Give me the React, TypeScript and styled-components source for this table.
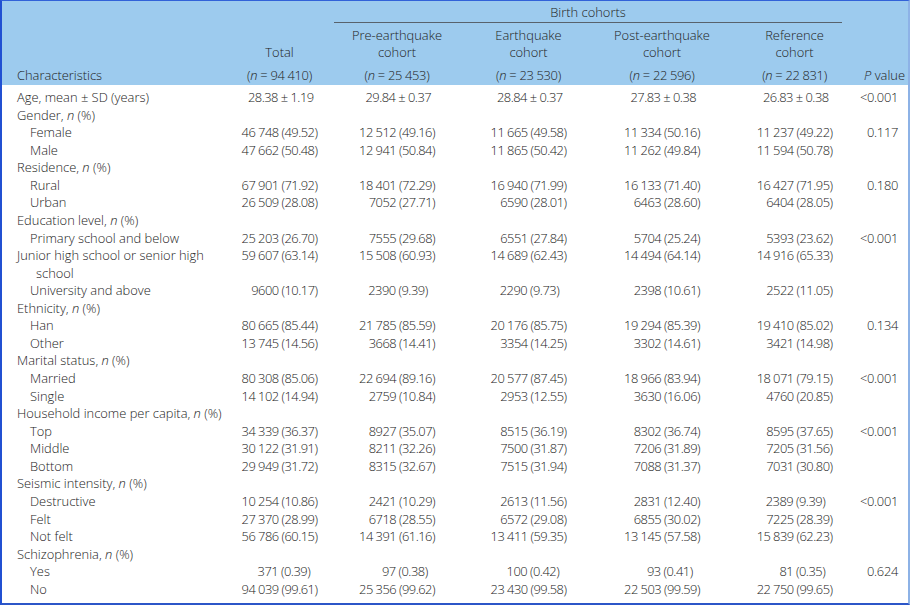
import React from "react";
import styled, { createGlobalStyle } from "styled-components";

type Line = {
  label: string;
  kind: "group" | "item" | "top";
  values?: string[];
  p?: string;
};

const cohorts = [
  { name: ["", "Total"], n: "94 410" },
  { name: ["Pre-earthquake", "cohort"], n: "25 453" },
  { name: ["Earthquake", "cohort"], n: "23 530" },
  { name: ["Post-earthquake", "cohort"], n: "22 596" },
  { name: ["Reference", "cohort"], n: "22 831" },
];

const lines: Line[] = [
  {
    label: "Age, mean ± SD (years)",
    kind: "top",
    values: ["28.38 ± 1.19", "29.84 ± 0.37", "28.84 ± 0.37", "27.83 ± 0.38", "26.83 ± 0.38"],
    p: "<0.001",
  },
  { label: "Gender", kind: "group" },
  {
    label: "Female",
    kind: "item",
    values: ["46 748 (49.52)", "12 512 (49.16)", "11 665 (49.58)", "11 334 (50.16)", "11 237 (49.22)"],
    p: "0.117",
  },
  {
    label: "Male",
    kind: "item",
    values: ["47 662 (50.48)", "12 941 (50.84)", "11 865 (50.42)", "11 262 (49.84)", "11 594 (50.78)"],
  },
  { label: "Residence", kind: "group" },
  {
    label: "Rural",
    kind: "item",
    values: ["67 901 (71.92)", "18 401 (72.29)", "16 940 (71.99)", "16 133 (71.40)", "16 427 (71.95)"],
    p: "0.180",
  },
  {
    label: "Urban",
    kind: "item",
    values: ["26 509 (28.08)", "7052 (27.71)", "6590 (28.01)", "6463 (28.60)", "6404 (28.05)"],
  },
  { label: "Education level", kind: "group" },
  {
    label: "Primary school and below",
    kind: "item",
    values: ["25 203 (26.70)", "7555 (29.68)", "6551 (27.84)", "5704 (25.24)", "5393 (23.62)"],
    p: "<0.001",
  },
  {
    label: "Junior high school or senior high school",
    kind: "top",
    values: ["59 607 (63.14)", "15 508 (60.93)", "14 689 (62.43)", "14 494 (64.14)", "14 916 (65.33)"],
  },
  {
    label: "University and above",
    kind: "item",
    values: ["9600 (10.17)", "2390 (9.39)", "2290 (9.73)", "2398 (10.61)", "2522 (11.05)"],
  },
  { label: "Ethnicity", kind: "group" },
  {
    label: "Han",
    kind: "item",
    values: ["80 665 (85.44)", "21 785 (85.59)", "20 176 (85.75)", "19 294 (85.39)", "19 410 (85.02)"],
    p: "0.134",
  },
  {
    label: "Other",
    kind: "item",
    values: ["13 745 (14.56)", "3668 (14.41)", "3354 (14.25)", "3302 (14.61)", "3421 (14.98)"],
  },
  { label: "Marital status", kind: "group" },
  {
    label: "Married",
    kind: "item",
    values: ["80 308 (85.06)", "22 694 (89.16)", "20 577 (87.45)", "18 966 (83.94)", "18 071 (79.15)"],
    p: "<0.001",
  },
  {
    label: "Single",
    kind: "item",
    values: ["14 102 (14.94)", "2759 (10.84)", "2953 (12.55)", "3630 (16.06)", "4760 (20.85)"],
  },
  { label: "Household income per capita", kind: "group" },
  {
    label: "Top",
    kind: "item",
    values: ["34 339 (36.37)", "8927 (35.07)", "8515 (36.19)", "8302 (36.74)", "8595 (37.65)"],
    p: "<0.001",
  },
  {
    label: "Middle",
    kind: "item",
    values: ["30 122 (31.91)", "8211 (32.26)", "7500 (31.87)", "7206 (31.89)", "7205 (31.56)"],
  },
  {
    label: "Bottom",
    kind: "item",
    values: ["29 949 (31.72)", "8315 (32.67)", "7515 (31.94)", "7088 (31.37)", "7031 (30.80)"],
  },
  { label: "Seismic intensity", kind: "group" },
  {
    label: "Destructive",
    kind: "item",
    values: ["10 254 (10.86)", "2421 (10.29)", "2613 (11.56)", "2831 (12.40)", "2389 (9.39)"],
    p: "<0.001",
  },
  {
    label: "Felt",
    kind: "item",
    values: ["27 370 (28.99)", "6718 (28.55)", "6572 (29.08)", "6855 (30.02)", "7225 (28.39)"],
  },
  {
    label: "Not felt",
    kind: "item",
    values: ["56 786 (60.15)", "14 391 (61.16)", "13 411 (59.35)", "13 145 (57.58)", "15 839 (62.23)"],
  },
  { label: "Schizophrenia", kind: "group" },
  {
    label: "Yes",
    kind: "item",
    values: ["371 (0.39)", "97 (0.38)", "100 (0.42)", "93 (0.41)", "81 (0.35)"],
    p: "0.624",
  },
  {
    label: "No",
    kind: "item",
    values: ["94 039 (99.61)", "25 356 (99.62)", "23 430 (99.58)", "22 503 (99.59)", "22 750 (99.65)"],
  },
];

// narrow space between thousands groups
const thin = (s: string) => s.replace(/(\d) (\d{3})/g, "$1\u2005$2");

const padFor = (s: string) => {
  if (/\(\d\.\d\d\)$/.test(s)) return "1ch";
  if (s.includes("±")) return "0.3em";
  return "0";
};

const GlobalStyle = createGlobalStyle`
  html, body {
    margin: 0;
    padding: 0;
    background: #ffffff;
  }
  body {
    font-family: "Open Sans", "Liberation Sans", Arial, sans-serif;
    color: #222222;
  }
`;

const Frame = styled.div`
  width: 910px;
  height: 605px;
  box-sizing: border-box;
  border-top: 1px solid #3262d8;
  border-left: 2px solid #2150d2;
  border-right: 2px solid #8db2e6;
  border-bottom: 2px solid #2c56c8;
  overflow: hidden;
`;

const Table = styled.table`
  width: 100%;
  border-collapse: collapse;
  table-layout: fixed;
  font-size: 12.9px;
  font-weight: 300;
  line-height: 17.57px;

  th {
    font-weight: 300;
  }
  td,
  th {
    padding: 0;
  }
`;

const Head = styled.thead`
  background: #9dcbee;
`;

const BirthCell = styled.th`
  padding-top: 3px !important;
`;

const BirthLabel = styled.div`
  line-height: 17.5px;
  margin: 0 14px 0 6px;
  border-bottom: 1px solid #58626c;
  text-align: center;
`;

const NameCell = styled.th`
  padding-top: 4px !important;
  line-height: 17.5px;
  text-align: center;
  vertical-align: bottom;
`;

const CountCell = styled.th<{ $align?: "left" | "center" | "right" }>`
  padding: 5px 0 1px 0 !important;
  line-height: 17.5px;
  text-align: ${(p) => p.$align ?? "center"};
  vertical-align: bottom;
  white-space: nowrap;
  letter-spacing: ${(p) => (p.$align ? "0" : "-0.3px")};
  ${(p) => (p.$align === "left" ? "padding-left: 15px !important;" : "")}
  ${(p) => (p.$align === "right" ? "padding-right: 3px !important;" : "")}
`;

const Body = styled.tbody`
  tr:first-child td {
    padding-top: 4px;
  }
`;

const Label = styled.td<{ $kind: Line["kind"] }>`
  text-align: left;
  vertical-align: top;
  padding-left: ${(p) => (p.$kind === "item" ? "28px" : p.$kind === "top" ? "34px" : "15px")} !important;
  text-indent: ${(p) => (p.$kind === "top" ? "-19px" : "0")};
  padding-right: 22px !important;
  white-space: ${(p) => (p.$kind === "group" ? "nowrap" : "normal")};
`;

const NumCell = styled.td`
  text-align: center;
  vertical-align: top;
`;

const Num = styled.span<{ $pad: string }>`
  display: inline-block;
  width: 76px;
  text-align: right;
  white-space: nowrap;
  letter-spacing: -0.5px;
  box-sizing: border-box;
  padding-right: ${(p) => p.$pad};
`;

const PCell = styled.td`
  text-align: right;
  vertical-align: top;
  padding-right: 10px !important;
  white-space: nowrap;
  letter-spacing: -0.3px;
`;

export default function App() {
  return (
    <>
      <GlobalStyle />
      <Frame>
        <Table>
          <colgroup>
            <col style={{ width: 229 }} />
            <col style={{ width: 97 }} />
            <col style={{ width: 138 }} />
            <col style={{ width: 125 }} />
            <col style={{ width: 142 }} />
            <col style={{ width: 123 }} />
            <col style={{ width: 52 }} />
          </colgroup>
          <Head>
            <tr>
              <th colSpan={2} />
              <BirthCell colSpan={4}>
                <BirthLabel>Birth cohorts</BirthLabel>
              </BirthCell>
              <th />
            </tr>
            <tr>
              <th />
              {cohorts.map((c) => (
                <NameCell key={c.n}>
                  {c.name[0] && (
                    <>
                      {c.name[0]}
                      <br />
                    </>
                  )}
                  {c.name[1]}
                </NameCell>
              ))}
              <th />
            </tr>
            <tr>
              <CountCell $align="left">Characteristics</CountCell>
              {cohorts.map((c) => (
                <CountCell key={c.n}>
                  (<i>n</i> = {thin(c.n)})
                </CountCell>
              ))}
              <CountCell $align="right">
                <i>P</i> value
              </CountCell>
            </tr>
          </Head>
          <Body>
            {lines.map((l, i) =>
              l.kind === "group" ? (
                <tr key={i}>
                  <Label $kind="group" colSpan={7}>
                    {l.label}, <i>n</i> (%)
                  </Label>
                </tr>
              ) : (
                <tr key={i}>
                  <Label $kind={l.kind}>{l.label}</Label>
                  {l.values!.map((v, j) => (
                    <NumCell key={j}>
                      <Num $pad={padFor(v)}>{thin(v)}</Num>
                    </NumCell>
                  ))}
                  <PCell>{l.p ?? ""}</PCell>
                </tr>
              )
            )}
          </Body>
        </Table>
      </Frame>
    </>
  );
}
